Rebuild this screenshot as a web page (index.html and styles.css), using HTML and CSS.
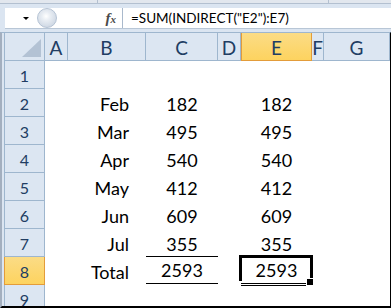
FILE: index.html
```html
<!DOCTYPE html>
<html lang="en">
<head>
    <meta charset="UTF-8">
    <meta name="viewport" content="width=device-width, initial-scale=1.0">
    <title>INDIRECT sum</title>
    <link rel="stylesheet" href="styles.css">
</head>
<body>
    <div class="app">
        <div class="top-strip">
            <span class="tick tick-left"></span>
            <span class="tick tick-right"></span>
        </div>

        <div class="formula-bar">
            <div class="name-box"><span class="dd-arrow"></span></div>
            <div class="grip"></div>
            <div class="fx-area"><span class="fx"><i>f</i><i class="fx-x">x</i></span></div>
            <div class="formula">=SUM(INDIRECT("E2"):E7)</div>
        </div>

        <div class="sheet">
            <div class="row head">
                <div class="corner"><span class="corner-tri"></span></div>
                <div class="ch">A</div>
                <div class="ch">B</div>
                <div class="ch">C</div>
                <div class="ch">D</div>
                <div class="ch active">E</div>
                <div class="ch">F</div>
                <div class="ch">G</div>
            </div>
            <div class="row">
                <div class="rh">1</div>
                <div class="c"></div><div class="c"></div><div class="c"></div><div class="c"></div><div class="c"></div><div class="c"></div><div class="c"></div>
            </div>
            <div class="row">
                <div class="rh">2</div>
                <div class="c"></div><div class="c label">Feb</div><div class="c num">182</div><div class="c"></div><div class="c num">182</div><div class="c"></div><div class="c"></div>
            </div>
            <div class="row">
                <div class="rh">3</div>
                <div class="c"></div><div class="c label">Mar</div><div class="c num">495</div><div class="c"></div><div class="c num">495</div><div class="c"></div><div class="c"></div>
            </div>
            <div class="row">
                <div class="rh">4</div>
                <div class="c"></div><div class="c label">Apr</div><div class="c num">540</div><div class="c"></div><div class="c num">540</div><div class="c"></div><div class="c"></div>
            </div>
            <div class="row">
                <div class="rh">5</div>
                <div class="c"></div><div class="c label">May</div><div class="c num">412</div><div class="c"></div><div class="c num">412</div><div class="c"></div><div class="c"></div>
            </div>
            <div class="row">
                <div class="rh">6</div>
                <div class="c"></div><div class="c label">Jun</div><div class="c num">609</div><div class="c"></div><div class="c num">609</div><div class="c"></div><div class="c"></div>
            </div>
            <div class="row">
                <div class="rh">7</div>
                <div class="c"></div><div class="c label">Jul</div><div class="c num underline">355</div><div class="c"></div><div class="c num underline">355</div><div class="c"></div><div class="c"></div>
            </div>
            <div class="row">
                <div class="rh active">8</div>
                <div class="c"></div><div class="c label">Total</div><div class="c num total">2593</div><div class="c"></div><div class="c num total selected">2593</div><div class="c"></div><div class="c"></div>
            </div>
            <div class="row">
                <div class="rh">9</div>
                <div class="c"></div><div class="c"></div><div class="c"></div><div class="c"></div><div class="c"></div><div class="c"></div><div class="c"></div>
            </div>
        </div>
    </div>
</body>
</html>
```

FILE: styles.css
```css
* {
    box-sizing: border-box;
}
body {
    margin: 0;
    background-color: #fff;
    font-family: Lato, "Open Sans", sans-serif;
}
.app {
    width: 391px;
    height: 308px;
    background-color: #dbe5f1;
    overflow: hidden;
}

/* ribbon edge above the formula bar */
.top-strip {
    position: relative;
    height: 4px;
    background-color: #e2e7ee;
    border-bottom: 1px solid #b3c0d0;
}
.tick {
    position: absolute;
    top: 0;
    width: 1px;
    height: 4px;
    background-color: #b3c0d0;
}
.tick-left { left: 97px; }
.tick-right { left: 328px; }

/* formula bar */
.formula-bar {
    display: flex;
    align-items: center;
    height: 21px;
    margin: 4px 0 3px 5px;
    background-color: #fff;
    border-bottom: 1px solid #b8c6d6;
}
.name-box {
    display: flex;
    justify-content: flex-end;
    align-items: center;
    width: 32px;
    height: 100%;
    padding-right: 8px;
}
.dd-arrow {
    width: 0;
    height: 0;
    border-left: 3px solid transparent;
    border-right: 3px solid transparent;
    border-top: 3px solid #000;
}
.grip {
    width: 20px;
    height: 20px;
    border-radius: 50%;
    border: 1px solid #b5c3d4;
    background: radial-gradient(circle at 45% 40%, #fff 0, #e8edf3 30%, #cfd8e4 75%, #dfe6ef 100%);
}
.fx-area {
    display: flex;
    justify-content: flex-end;
    align-items: center;
    width: 66px;
    height: 100%;
    padding-right: 6px;
    border-right: 1px solid #a9b9cc;
}
.fx {
    font-family: "Liberation Serif", serif;
    font-weight: bold;
    color: #4a4a4a;
    font-size: 15px;
    line-height: 1;
}
.fx-x {
    font-size: 11px;
}
.formula {
    flex: 1;
    padding-left: 8px;
    font-size: 13.5px;
    color: #000;
    white-space: nowrap;
}

/* worksheet */
.sheet {
    height: 276px;
    padding-left: 2px;
    border-top: 1px solid #9eb6ce;
    border-left: 2px solid #a3afbf;
    border-right: 1px solid #000;
    border-bottom: 2px solid #000;
    overflow: hidden;
}
.row {
    display: grid;
    grid-template-columns: 41px 23px 78px 72px 23px 71px 12px 66px;
    height: 28px;
}
.corner,
.ch,
.rh {
    background-color: #dce6f2;
    border-right: 1px solid #9eb6ce;
    border-bottom: 1px solid #9eb6ce;
    color: #213d63;
    display: flex;
    justify-content: center;
    align-items: center;
}
.corner,
.rh {
    border-left: 1px solid #9eb6ce;
}
.ch {
    font-size: 19px;
    padding-top: 1px;
}
.rh {
    font-size: 16px;
    padding-top: 2px;
}
.ch.active,
.rh.active {
    background: linear-gradient(#fbdc86, #fdd35f);
    border-color: #e39c3a;
}
.ch.active {
    border-left: 1px solid #e39c3a;
}
.corner {
    justify-content: flex-end;
    align-items: flex-end;
    padding: 0 3px 3px 0;
}
.corner-tri {
    width: 0;
    height: 0;
    border-left: 19px solid transparent;
    border-bottom: 18px solid #b3c2d4;
}

.c {
    background-color: #fff;
    border-bottom: 1px solid transparent;
    display: flex;
    align-items: flex-end;
    font-size: 18px;
    line-height: 18px;
    color: #000;
    padding-bottom: 3px;
}
.label {
    justify-content: flex-end;
    padding-right: 17px;
}
.num {
    justify-content: center;
}
.underline {
    border-bottom-color: #000;
}
.total {
    border-bottom: 3px double #000;
    margin-bottom: -1px;
    padding-bottom: 4px;
}
.selected {
    position: relative;
}
.selected::before {
    content: "";
    position: absolute;
    left: -2px;
    right: -1px;
    top: -2px;
    bottom: 2px;
    border: 3px solid #000;
    border-bottom: 0;
}
.selected::after {
    content: "";
    position: absolute;
    right: -2px;
    bottom: -3px;
    width: 6px;
    height: 6px;
    background-color: #000;
    border: 1px solid #fff;
}
```
